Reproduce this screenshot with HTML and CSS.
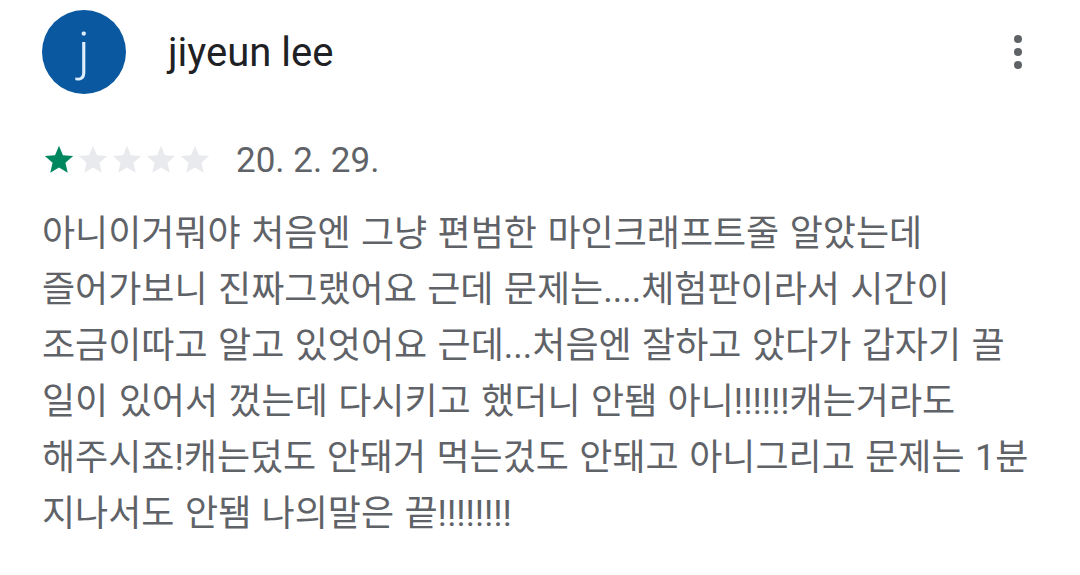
FILE: index.html
```html
<!DOCTYPE html>
<html lang="ko">
<head>
<meta charset="utf-8">
<link rel="stylesheet" href="styles.css">
</head>
<body>
<div class="review">
  <div class="header">
    <div class="avatar">j</div>
    <div class="name">jiyeun lee</div>
    <div class="menu" aria-label="more">
      <span class="dot"></span><span class="dot"></span><span class="dot"></span>
    </div>
  </div>
  <div class="rating">
    <div class="stars">
      <svg class="star on" viewBox="0 0 24 24"><path d="M12 17.27L18.18 21l-1.64-7.03L22 9.24l-7.19-.61L12 2 9.19 8.63 2 9.24l5.46 4.73L5.82 21z"/></svg>
      <svg class="star" viewBox="0 0 24 24"><path d="M12 17.27L18.18 21l-1.64-7.03L22 9.24l-7.19-.61L12 2 9.19 8.63 2 9.24l5.46 4.73L5.82 21z"/></svg>
      <svg class="star" viewBox="0 0 24 24"><path d="M12 17.27L18.18 21l-1.64-7.03L22 9.24l-7.19-.61L12 2 9.19 8.63 2 9.24l5.46 4.73L5.82 21z"/></svg>
      <svg class="star" viewBox="0 0 24 24"><path d="M12 17.27L18.18 21l-1.64-7.03L22 9.24l-7.19-.61L12 2 9.19 8.63 2 9.24l5.46 4.73L5.82 21z"/></svg>
      <svg class="star" viewBox="0 0 24 24"><path d="M12 17.27L18.18 21l-1.64-7.03L22 9.24l-7.19-.61L12 2 9.19 8.63 2 9.24l5.46 4.73L5.82 21z"/></svg>
    </div>
    <div class="date">20. 2. 29.</div>
  </div>
  <p class="text">아니이거뭐야 처음엔 그냥 편범한 마인크래프트줄 알았는데<br>즐어가보니 진짜그랬어요 근데 문제는....체험판이라서 시간이<br>조금이따고 알고 있엇어요 근데...처음엔 잘하고 았다가 갑자기 끌<br>일이 있어서 껐는데 다시키고 했더니 안됌 아니!!!!!!캐는거라도<br>해주시죠!캐는덨도 안돼거 먹는겄도 안돼고 아니그리고 문제는 1분<br>지나서도 안됌 나의말은 끝!!!!!!!!</p>
</div>
</body>
</html>
```

FILE: styles.css
```css
html, body {
  margin: 0;
  padding: 0;
  background: #ffffff;
}

.review {
  width: 1080px;
  height: 575px;
  overflow: hidden;
  box-sizing: border-box;
  padding: 10px 0 0 42px;
}

.header {
  display: flex;
  align-items: center;
  height: 84px;
  padding-right: 58px;
}

.avatar {
  width: 84px;
  height: 84px;
  border-radius: 50%;
  background: #0a58a0;
  color: #dfeefb;
  font-family: Roboto, "Noto Sans", sans-serif;
  font-weight: 300;
  font-size: 52px;
  line-height: 1;
  display: flex;
  align-items: center;
  justify-content: center;
  flex-shrink: 0;
}

.name {
  margin-left: 42px;
  font-family: Roboto, "Noto Sans", sans-serif;
  font-size: 40px;
  color: #202124;
  flex: 1;
}

.menu {
  display: flex;
  flex-direction: column;
  gap: 5px;
  align-items: center;
}

.dot {
  width: 8px;
  height: 8px;
  border-radius: 50%;
  background: #5f6368;
}

.rating {
  display: flex;
  align-items: center;
  margin-top: 49px;
  height: 34px;
}

.stars {
  display: flex;
}

.star {
  width: 34px;
  height: 34px;
  fill: #e8eaed;
}

.star.on {
  fill: #01875f;
}

.date {
  margin-left: 24px;
  font-family: Roboto, "Noto Sans", sans-serif;
  font-size: 35px;
  color: #5f6368;
}

.text {
  margin: 29px 0 0 0;
  font-family: Roboto, "Noto Sans CJK KR", sans-serif;
  font-size: 36px;
  line-height: 56px;
  color: #5f6368;
  word-spacing: 1.5px;
  white-space: nowrap;
}
```
